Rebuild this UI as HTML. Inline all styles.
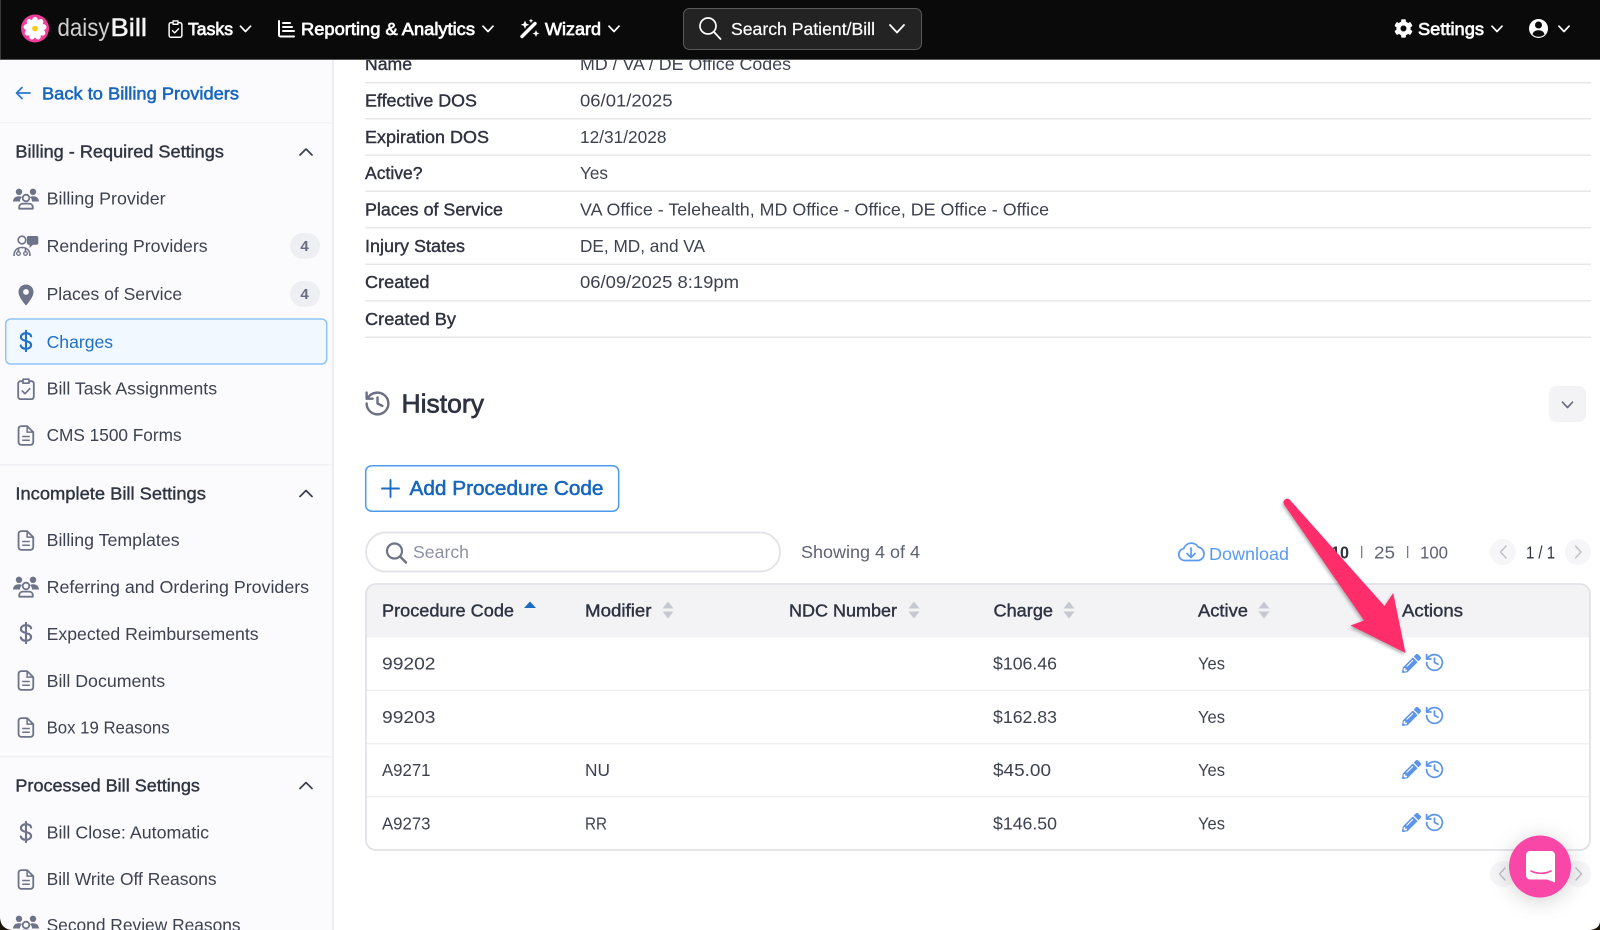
<!DOCTYPE html>
<html lang="en"><head><meta charset="utf-8"><title>daisyBill Charges</title>
<style>
html,body{margin:0;padding:0;background:#fff;width:1600px;height:930px;overflow:hidden}
svg{display:block}
text{font-family:"Liberation Sans",sans-serif;font-size:17.5px}
.m{stroke-width:.4px}
.s{stroke-width:.55px}
</style></head><body>
<svg xmlns="http://www.w3.org/2000/svg" width="1600" height="930" viewBox="0 0 1600 930">
<defs>
<symbol id="chev" viewBox="0 0 12 8"><path d="M1 1.2 6 6.5 11 1.2" fill="none" stroke="currentColor" stroke-width="1.7" stroke-linecap="round" stroke-linejoin="round"/></symbol>
<symbol id="up" viewBox="0 0 14 8"><path d="M1 7 7 1l6 6" fill="none" stroke="#3a3f4c" stroke-width="1.7" stroke-linecap="round" stroke-linejoin="round"/></symbol>
<symbol id="doc" viewBox="0 0 18 22"><path d="M4 1.2h6.2L16.6 7.500V18a2.800 2.800 0 0 1-2.800 2.800H4A2.800 2.800 0 0 1 1.200 18V4A2.800 2.800 0 0 1 4 1.200Z" fill="none" stroke="#6d7388" stroke-width="1.900" stroke-linejoin="round"/><path d="M10.200 1.500V7.500h6M5 12h8M5 16h8" fill="none" stroke="#6d7388" stroke-width="1.600"/></symbol>
<symbol id="dollar" viewBox="0 0 16 26"><path d="M14 7.500C13.500 5 11 3.800 8 3.800 4.600 3.800 2 5.500 2 8.200c0 6 12 3.500 12 9.600 0 2.800-2.700 4.400-6 4.400-3.200 0-5.600-1.300-6.200-4M8 1v24" fill="none" stroke="currentColor" stroke-width="2.500" stroke-linecap="round"/></symbol>
<symbol id="group" viewBox="0 0 26 22"><g fill="#6d7388"><circle cx="6" cy="3.800" r="3.200"/><circle cx="20" cy="3.800" r="3.200"/><path d="M0 13.500C.3 10 2.500 8.300 6 8.300c1.300 0 2.300.3 3.100.8C7.700 10 7 11.600 7 13.500ZM26 13.500C25.700 10 23.500 8.300 20 8.300c-1.300 0-2.300.3-3.100.8 1.400.9 2.100 2.500 2.100 4.400Z"/></g><circle cx="13" cy="10" r="3.300" fill="none" stroke="#6d7388" stroke-width="1.800"/><path d="M6.200 20.700v-1.500c0-2.200 1.800-3.600 4-3.600h5.600c2.200 0 4 1.400 4 3.600v1.500Z" fill="none" stroke="#6d7388" stroke-width="1.800" stroke-linejoin="round"/></symbol>
<symbol id="render" viewBox="0 0 26 22"><circle cx="9" cy="5" r="3.800" fill="none" stroke="#6d7388" stroke-width="1.700"/><path d="M15.500 1h8A1.800 1.800 0 0 1 25.300 2.800V8A1.800 1.800 0 0 1 23.500 9.800H20L16.500 13V9.800h-1A1.500 1.500 0 0 1 14 8V2.500A1.500 1.500 0 0 1 15.500 1Z" fill="#6d7388"/><path d="M1 21c0-5.500 3-8.500 8-8.500s8 3 8 8.500M5.500 13.500v3M12.500 13.500v3" fill="none" stroke="#6d7388" stroke-width="1.600"/><circle cx="5.500" cy="18.500" r="1.800" fill="none" stroke="#6d7388" stroke-width="1.300"/><circle cx="12.500" cy="18.500" r="1.800" fill="none" stroke="#6d7388" stroke-width="1.300"/></symbol>
<symbol id="pin" viewBox="0 0 16 22"><path fill-rule="evenodd" d="M8 .5C3.800.5.500 3.700.500 8c0 4.900 5 10.700 7.500 13.500C10.500 18.700 15.500 12.900 15.500 8 15.500 3.700 12.200.5 8 .5Zm0 10.300A2.900 2.900 0 1 1 8 5a2.900 2.900 0 0 1 0 5.800Z" fill="#6d7388"/></symbol>
<symbol id="clip" viewBox="0 0 18 22"><path d="M5.500 3.200H3.500A2.300 2.300 0 0 0 1.200 5.500v13.300A2.300 2.300 0 0 0 3.500 21.100h11a2.300 2.300 0 0 0 2.300-2.300V5.500a2.300 2.300 0 0 0-2.300-2.300h-2" fill="none" stroke="currentColor" stroke-width="1.800"/><path d="M6 1.200h6v4H6Z" fill="none" stroke="currentColor" stroke-width="1.700" stroke-linejoin="round"/><path d="M5.300 13l2.700 2.700 4.800-5" fill="none" stroke="currentColor" stroke-width="1.700" stroke-linecap="round" stroke-linejoin="round"/></symbol>
<symbol id="hist" viewBox="0 0 24 24"><path d="M3 12a9 9 0 1 0 9-9 9.750 9.750 0 0 0-6.740 2.740L3 8M3 3v5h5M12 7v5l4 2" fill="none" stroke="currentColor" stroke-width="2" stroke-linecap="round" stroke-linejoin="round"/></symbol>
<symbol id="pen" viewBox="0 0 512 512"><path fill="currentColor" d="M497.900 142.100l-46.100 46.100c-4.700 4.700-12.300 4.700-17 0l-111-111c-4.700-4.700-4.700-12.300 0-17l46.100-46.100c18.700-18.700 49.100-18.700 67.900 0l60.100 60.100c18.800 18.700 18.800 49.100 0 67.900zM284.200 99.800L21.600 362.400.4 483.900c-2.900 16.400 11.400 30.600 27.800 27.800l121.500-21.300 262.600-262.600c4.700-4.700 4.700-12.300 0-17l-111-111c-4.800-4.700-12.400-4.700-17.100 0zM124.100 339.900c-5.500-5.500-5.500-14.300 0-19.800l154-154c5.500-5.500 14.300-5.500 19.800 0s5.500 14.300 0 19.800l-154 154c-5.500 5.500-14.300 5.500-19.800 0zM88 424h48v36.300l-64.500 11.300-31.100-31.100L51.700 376H88v48z"/></symbol>
<symbol id="gear" viewBox="0 0 512 512"><path fill="#fff" d="M487.400 315.700l-42.600-24.600c4.300-23.200 4.300-47 0-70.200l42.600-24.600c4.900-2.800 7.100-8.600 5.500-14-11.100-35.600-30-67.800-54.700-94.600-3.800-4.100-10-5.100-14.800-2.300L380.800 110c-17.900-15.400-38.500-27.300-60.800-35.100V25.800c0-5.600-3.900-10.500-9.400-11.700-36.700-8.200-74.300-7.800-109.200 0-5.500 1.200-9.400 6.100-9.400 11.700V75c-22.200 7.900-42.800 19.800-60.800 35.100L88.700 85.500c-4.900-2.800-11-1.900-14.800 2.300-24.700 26.700-43.600 58.900-54.700 94.600-1.700 5.400.6 11.200 5.500 14L67.300 221c-4.300 23.200-4.300 47 0 70.200l-42.600 24.600c-4.900 2.800-7.100 8.600-5.500 14 11.100 35.600 30 67.800 54.700 94.600 3.800 4.100 10 5.100 14.800 2.300l42.600-24.600c17.900 15.400 38.500 27.300 60.800 35.100v49.200c0 5.600 3.900 10.500 9.400 11.700 36.700 8.200 74.300 7.800 109.200 0 5.500-1.200 9.400-6.100 9.400-11.700v-49.200c22.200-7.900 42.800-19.800 60.800-35.100l42.600 24.600c4.900 2.800 11 1.900 14.800-2.300 24.700-26.700 43.600-58.900 54.700-94.600 1.500-5.500-.7-11.300-5.600-14.100zM256 336c-44.100 0-80-35.900-80-80s35.900-80 80-80 80 35.900 80 80-35.900 80-80 80z"/></symbol>
<symbol id="sort" viewBox="0 0 12 18"><path d="M6 0.500 11.500 7.500H.5ZM6 17.500.5 10.500h11Z" fill="#c6c8d1"/></symbol>
<filter id="ash" x="-20%" y="-20%" width="140%" height="140%"><feDropShadow dx="-1" dy="2" stdDeviation="1.500" flood-color="#000" flood-opacity=".3"/></filter>
<filter id="bsh" x="-50%" y="-50%" width="200%" height="200%"><feDropShadow dx="0" dy="3" stdDeviation="10" flood-color="#000" flood-opacity=".18"/></filter>
</defs>

<rect width="1600" height="930" fill="#fff"/>

<!-- sidebar -->
<rect x="0" y="59" width="333" height="871" fill="#fbfbfe"/>
<rect x="332" y="59" width="2" height="871" fill="#eeeef2"/>
<rect x="0" y="122" width="332" height="1.500" fill="#f2f2f6"/>
<rect x="0" y="464" width="332" height="1.500" fill="#f2f2f6"/>
<rect x="0" y="756" width="332" height="1.500" fill="#f2f2f6"/>

<path d="M30 93H16.500M22 87.500 16.500 93l5.500 5.500" fill="none" stroke="#2a78cf" stroke-width="1.700" stroke-linecap="round" stroke-linejoin="round"/>
<text x="42" y="99.500" textLength="197" lengthAdjust="spacingAndGlyphs" fill="#1766bd" stroke="#1766bd" class="s">Back to Billing Providers</text>

<g fill="#2f3542" stroke="#2f3542" class="m" transform="translate(-.6 -.7)">
<text x="16" y="158.300" textLength="208.500" lengthAdjust="spacingAndGlyphs">Billing - Required Settings</text>
<text x="16" y="500" textLength="190.500" lengthAdjust="spacingAndGlyphs">Incomplete Bill Settings</text>
<text x="16" y="792.300" textLength="184.500" lengthAdjust="spacingAndGlyphs">Processed Bill Settings</text>
</g>
<use href="#up" x="299" y="148" width="14" height="8"/>
<use href="#up" x="299" y="489.500" width="14" height="8"/>
<use href="#up" x="299" y="781.500" width="14" height="8"/>

<rect x="5.700" y="319" width="321" height="45" rx="5" fill="#f2f8ff" stroke="#8fc4f8" stroke-width="1.500"/>

<g fill="#3d4250" transform="translate(-.4 -.5)">
<text x="47" y="205" textLength="119" lengthAdjust="spacingAndGlyphs">Billing Provider</text>
<text x="47" y="252.700" textLength="161" lengthAdjust="spacingAndGlyphs">Rendering Providers</text>
<text x="47" y="300.700" textLength="135.500" lengthAdjust="spacingAndGlyphs">Places of Service</text>
<text x="47" y="348.300" textLength="66.500" lengthAdjust="spacingAndGlyphs" fill="#1f6fc6">Charges</text>
<text x="47" y="395" textLength="170.500" lengthAdjust="spacingAndGlyphs">Bill Task Assignments</text>
<text x="47" y="441.700" textLength="135" lengthAdjust="spacingAndGlyphs">CMS 1500 Forms</text>
<text x="47" y="546.700" textLength="133" lengthAdjust="spacingAndGlyphs">Billing Templates</text>
<text x="47" y="593.300" textLength="262.500" lengthAdjust="spacingAndGlyphs">Referring and Ordering Providers</text>
<text x="47" y="640.300" textLength="212" lengthAdjust="spacingAndGlyphs">Expected Reimbursements</text>
<text x="47" y="687.300" textLength="118.500" lengthAdjust="spacingAndGlyphs">Bill Documents</text>
<text x="47" y="734" textLength="123" lengthAdjust="spacingAndGlyphs">Box 19 Reasons</text>
<text x="47" y="839" textLength="162.500" lengthAdjust="spacingAndGlyphs">Bill Close: Automatic</text>
<text x="47" y="885.700" textLength="170" lengthAdjust="spacingAndGlyphs">Bill Write Off Reasons</text>
<text x="47" y="931.700" textLength="194" lengthAdjust="spacingAndGlyphs">Second Review Reasons</text>
</g>

<use href="#group" x="13" y="188" width="26" height="22"/>
<use href="#render" x="13" y="235" width="26" height="22"/>
<use href="#pin" x="18" y="284" width="16" height="22"/>
<use href="#dollar" x="18" y="330" width="16" height="22" color="#1f6fc6"/>
<use href="#clip" x="17" y="378" width="18" height="22" color="#6d7388"/>
<use href="#doc" x="17" y="425" width="18" height="21"/>
<use href="#doc" x="17" y="530" width="18" height="21"/>
<use href="#group" x="13" y="576" width="26" height="22"/>
<use href="#dollar" x="18" y="622" width="16" height="22" color="#6d7388"/>
<use href="#doc" x="17" y="670" width="18" height="21"/>
<use href="#doc" x="17" y="717" width="18" height="21"/>
<use href="#dollar" x="18" y="821" width="16" height="22" color="#6d7388"/>
<use href="#doc" x="17" y="869" width="18" height="21"/>
<use href="#group" x="13" y="915" width="26" height="22"/>

<rect x="290" y="233" width="30" height="26" rx="13" fill="#eeeff3"/>
<rect x="290" y="281" width="30" height="26" rx="13" fill="#eeeff3"/>
<text x="304.500" y="251" text-anchor="middle" font-weight="700" fill="#666c80" style="font-size:15px">4</text>
<text x="304.500" y="299" text-anchor="middle" font-weight="700" fill="#666c80" style="font-size:15px">4</text>

<!-- detail rows -->
<g fill="#2f3340" stroke="#2f3340" class="m">
<text x="365" y="70" textLength="47" lengthAdjust="spacingAndGlyphs">Name</text>
<text x="365" y="106.500" textLength="112" lengthAdjust="spacingAndGlyphs">Effective DOS</text>
<text x="365" y="143" textLength="124" lengthAdjust="spacingAndGlyphs">Expiration DOS</text>
<text x="365" y="179" textLength="57.500" lengthAdjust="spacingAndGlyphs">Active?</text>
<text x="365" y="215.500" textLength="138" lengthAdjust="spacingAndGlyphs">Places of Service</text>
<text x="365" y="252" textLength="100" lengthAdjust="spacingAndGlyphs">Injury States</text>
<text x="365" y="288" textLength="64.500" lengthAdjust="spacingAndGlyphs">Created</text>
<text x="365" y="325" textLength="91" lengthAdjust="spacingAndGlyphs">Created By</text>
</g>
<g fill="#3d4250">
<text x="580" y="70" textLength="211" lengthAdjust="spacingAndGlyphs">MD / VA / DE Office Codes</text>
<text x="580" y="106.500" textLength="92.500" lengthAdjust="spacingAndGlyphs">06/01/2025</text>
<text x="580" y="143" textLength="86.500" lengthAdjust="spacingAndGlyphs">12/31/2028</text>
<text x="580" y="179" textLength="28" lengthAdjust="spacingAndGlyphs">Yes</text>
<text x="580" y="215.500" textLength="469" lengthAdjust="spacingAndGlyphs">VA Office - Telehealth, MD Office - Office, DE Office - Office</text>
<text x="580" y="252" textLength="125" lengthAdjust="spacingAndGlyphs">DE, MD, and VA</text>
<text x="580" y="288" textLength="159" lengthAdjust="spacingAndGlyphs">06/09/2025 8:19pm</text>
</g>
<g fill="#e8e8eb">
<rect x="365" y="82" width="1226" height="1.500"/><rect x="365" y="118" width="1226" height="1.500"/>
<rect x="365" y="154.500" width="1226" height="1.500"/><rect x="365" y="190.500" width="1226" height="1.500"/>
<rect x="365" y="227" width="1226" height="1.500"/><rect x="365" y="263.500" width="1226" height="1.500"/>
<rect x="365" y="300" width="1226" height="1.500"/><rect x="365" y="336.500" width="1226" height="1.500"/>
</g>

<!-- history -->
<use href="#hist" x="363" y="389" width="29" height="29" color="#6a7082"/>
<text x="401.500" y="412.700" textLength="82.500" lengthAdjust="spacingAndGlyphs" fill="#2d3340" stroke="#2d3340" stroke-width=".7" style="font-size:26px">History</text>
<rect x="1549" y="386" width="37" height="36" rx="7" fill="#f3f3f6"/>
<use href="#chev" x="1561.500" y="401" width="12" height="8" color="#6a7082"/>

<!-- add button -->
<rect x="365.700" y="465.700" width="253" height="45.500" rx="6" fill="#fff" stroke="#4c9bea" stroke-width="1.500"/>
<path d="M390.500 480v17M382 488.500h17" stroke="#1c6cc4" stroke-width="1.900" stroke-linecap="round"/>
<text x="409.500" y="495" textLength="194" lengthAdjust="spacingAndGlyphs" fill="#1766bd" stroke="#1766bd" class="s" style="font-size:20.500px">Add Procedure Code</text>

<!-- search -->
<rect x="366" y="532.500" width="414" height="39" rx="19.500" fill="#fff" stroke="#e2e2e7" stroke-width="1.800"/>
<circle cx="394.500" cy="551" r="7.500" fill="none" stroke="#6d7388" stroke-width="2.200"/>
<path d="M400 556.500l6 6" stroke="#6d7388" stroke-width="2.400" stroke-linecap="round"/>
<text x="413" y="558" textLength="56" lengthAdjust="spacingAndGlyphs" fill="#8d92a3">Search</text>
<text x="801" y="558" textLength="119" lengthAdjust="spacingAndGlyphs" fill="#5e6374">Showing 4 of 4</text>

<!-- download -->
<path d="M1184.500 560.500a6 6 0 0 1-.8-11.900 8 8 0 0 1 14.500-1.500 6.800 6.800 0 0 1 .3 13.400Z" fill="none" stroke="#5b9aef" stroke-width="1.700" stroke-linejoin="round"/>
<path d="M1191 548v9M1187 553.500l4 4 4-4" fill="none" stroke="#5b9aef" stroke-width="1.700" stroke-linecap="round" stroke-linejoin="round"/>
<text x="1209" y="560" textLength="80" lengthAdjust="spacingAndGlyphs" fill="#5b9aef">Download</text>
<text x="1331" y="558.300" textLength="18" lengthAdjust="spacingAndGlyphs" fill="#2d3340" font-weight="700">10</text>
<rect x="1361" y="546" width="1.300" height="12" fill="#777c8c"/>
<text x="1374" y="558.300" textLength="21" lengthAdjust="spacingAndGlyphs" fill="#5e6374">25</text>
<rect x="1407" y="546" width="1.300" height="12" fill="#777c8c"/>
<text x="1420" y="558.300" textLength="28" lengthAdjust="spacingAndGlyphs" fill="#5e6374">100</text>
<circle cx="1503" cy="552" r="13" fill="#f6f6f8"/>
<path d="M1506 546l-5.500 6 5.500 6" fill="none" stroke="#bfc1ca" stroke-width="1.500" stroke-linecap="round" stroke-linejoin="round"/>
<text x="1526" y="558.300" textLength="29" lengthAdjust="spacingAndGlyphs" fill="#2d3340">1 / 1</text>
<circle cx="1578" cy="552" r="13" fill="#f6f6f8"/>
<path d="M1575.500 546l5.500 6-5.500 6" fill="none" stroke="#bfc1ca" stroke-width="1.500" stroke-linecap="round" stroke-linejoin="round"/>

<!-- table -->
<path d="M366 637.500V594a10 10 0 0 1 10-10h1204a10 10 0 0 1 10 10v43.500Z" fill="#f3f3f6"/>
<rect x="366" y="584" width="1224" height="266" rx="10" fill="none" stroke="#e1e2e7" stroke-width="1.800"/>
<g fill="#f0f0f3">
<rect x="367" y="689.500" width="1222" height="1.500"/><rect x="367" y="743" width="1222" height="1.500"/><rect x="367" y="796" width="1222" height="1.500"/>
</g>
<g fill="#2d3340" stroke="#2d3340" class="m">
<text x="382" y="616.500" textLength="132" lengthAdjust="spacingAndGlyphs">Procedure Code</text>
<text x="585" y="616.500" textLength="66.500" lengthAdjust="spacingAndGlyphs">Modifier</text>
<text x="789" y="616.500" textLength="108" lengthAdjust="spacingAndGlyphs">NDC Number</text>
<text x="993.500" y="616.500" textLength="59.500" lengthAdjust="spacingAndGlyphs">Charge</text>
<text x="1198" y="616.500" textLength="50" lengthAdjust="spacingAndGlyphs">Active</text>
<text x="1402" y="616.500" textLength="61" lengthAdjust="spacingAndGlyphs">Actions</text>
</g>
<path d="M530 601.500l6 6.500h-12Z" fill="#1c6cc4"/>
<use href="#sort" x="662" y="601" width="12" height="18"/>
<use href="#sort" x="908" y="601" width="12" height="18"/>
<use href="#sort" x="1063" y="601" width="12" height="18"/>
<use href="#sort" x="1258" y="601" width="12" height="18"/>

<g fill="#3d4250">
<text x="382" y="669.500" textLength="53.500" lengthAdjust="spacingAndGlyphs">99202</text>
<text x="993" y="669.500" textLength="64" lengthAdjust="spacingAndGlyphs">$106.46</text>
<text x="1198" y="669.500" textLength="27" lengthAdjust="spacingAndGlyphs">Yes</text>
<text x="382" y="723" textLength="53.500" lengthAdjust="spacingAndGlyphs">99203</text>
<text x="993" y="723" textLength="64" lengthAdjust="spacingAndGlyphs">$162.83</text>
<text x="1198" y="723" textLength="27" lengthAdjust="spacingAndGlyphs">Yes</text>
<text x="382" y="776" textLength="48.500" lengthAdjust="spacingAndGlyphs">A9271</text>
<text x="585" y="776" textLength="25" lengthAdjust="spacingAndGlyphs">NU</text>
<text x="993" y="776" textLength="58" lengthAdjust="spacingAndGlyphs">$45.00</text>
<text x="1198" y="776" textLength="27" lengthAdjust="spacingAndGlyphs">Yes</text>
<text x="382" y="829.500" textLength="48.500" lengthAdjust="spacingAndGlyphs">A9273</text>
<text x="585" y="829.500" textLength="22" lengthAdjust="spacingAndGlyphs">RR</text>
<text x="993" y="829.500" textLength="64" lengthAdjust="spacingAndGlyphs">$146.50</text>
<text x="1198" y="829.500" textLength="27" lengthAdjust="spacingAndGlyphs">Yes</text>
</g>

<g color="#5b94ea">
<use href="#pen" x="1402" y="654" width="19" height="19"/><use href="#hist" x="1424" y="652" width="21" height="21"/>
<use href="#pen" x="1402" y="707" width="19" height="19"/><use href="#hist" x="1424" y="705" width="21" height="21"/>
<use href="#pen" x="1402" y="760" width="19" height="19"/><use href="#hist" x="1424" y="759" width="21" height="21"/>
<use href="#pen" x="1402" y="813" width="19" height="19"/><use href="#hist" x="1424" y="812" width="21" height="21"/>
</g>

<!-- lower pager -->
<circle cx="1503" cy="874" r="13" fill="#f6f6f8"/>
<path d="M1505 868l-5.500 6 5.500 6" fill="none" stroke="#bfc1ca" stroke-width="1.500" stroke-linecap="round" stroke-linejoin="round"/>
<circle cx="1578" cy="874" r="13" fill="#f6f6f8"/>
<path d="M1576 868l5.500 6-5.500 6" fill="none" stroke="#bfc1ca" stroke-width="1.500" stroke-linecap="round" stroke-linejoin="round"/>

<!-- chat launcher -->
<circle cx="1540" cy="866.500" r="31" fill="#f946a8" filter="url(#bsh)"/>
<path d="M1530 851h21a4 4 0 0 1 4 4v27.500l-8-3h-17a4 4 0 0 1-4-4V855a4 4 0 0 1 4-4Z" fill="#fff"/>
<path d="M1531 871c6 3 14 3 20 0" fill="none" stroke="#f946a8" stroke-width="1.600" stroke-linecap="round"/>

<!-- arrow -->
<path d="M1285 499.500c1.500-1.300 3.500-1.200 5 .5L1384.500 606l8.700-13L1405.500 653l-55-27.500 13.500-5L1284 504.500c-1-1.600-.5-3.700 1-5Z" fill="#ff2d6b" filter="url(#ash)"/>

<!-- top bar -->
<rect width="1600" height="59.500" fill="#0a0a0a"/>
<rect y="59" width="1600" height="1" fill="#555"/>
<rect width="1" height="59" fill="#3a3a3a"/>
<circle cx="35" cy="28.500" r="14" fill="#f23d9d"/>
<g fill="#fff" transform="translate(35 28.500)">
<ellipse cx="0" cy="-7" rx="3.200" ry="4.600"/><ellipse cx="0" cy="-7" rx="3.200" ry="4.600" transform="rotate(40)"/><ellipse cx="0" cy="-7" rx="3.200" ry="4.600" transform="rotate(80)"/><ellipse cx="0" cy="-7" rx="3.200" ry="4.600" transform="rotate(120)"/><ellipse cx="0" cy="-7" rx="3.200" ry="4.600" transform="rotate(160)"/><ellipse cx="0" cy="-7" rx="3.200" ry="4.600" transform="rotate(200)"/><ellipse cx="0" cy="-7" rx="3.200" ry="4.600" transform="rotate(240)"/><ellipse cx="0" cy="-7" rx="3.200" ry="4.600" transform="rotate(280)"/><ellipse cx="0" cy="-7" rx="3.200" ry="4.600" transform="rotate(320)"/>
</g>
<circle cx="35" cy="28.500" r="2.800" fill="#ffc90e"/>
<text x="57.500" y="36" textLength="52" lengthAdjust="spacingAndGlyphs" fill="#cfcfcf" style="font-size:25px">daisy</text>
<text x="110.500" y="36" textLength="36.500" lengthAdjust="spacingAndGlyphs" fill="#f4f4f4" stroke="#f4f4f4" stroke-width=".5" style="font-size:25px">Bill</text>

<use href="#clip" x="168" y="20" width="15" height="18" color="#fff"/>
<g fill="#fff" stroke="#fff" stroke-width=".7">
<text x="188" y="35" textLength="45" lengthAdjust="spacingAndGlyphs">Tasks</text>
<text x="301" y="35" textLength="174" lengthAdjust="spacingAndGlyphs">Reporting &amp; Analytics</text>
<text x="545" y="35" textLength="56" lengthAdjust="spacingAndGlyphs">Wizard</text>
<text x="1418" y="35" textLength="66" lengthAdjust="spacingAndGlyphs">Settings</text>
</g>
<g color="#fff">
<use href="#chev" x="239.500" y="25" width="12" height="8"/>
<use href="#chev" x="482" y="25" width="12" height="8"/>
<use href="#chev" x="608" y="25" width="12" height="8"/>
<use href="#chev" x="1491" y="25" width="12" height="8"/>
<use href="#chev" x="1558" y="25" width="12" height="8"/>
</g>
<path d="M279 21v14a1.500 1.500 0 0 0 1.500 1.500H294" fill="none" stroke="#fff" stroke-width="2" stroke-linecap="round"/>
<path d="M283 23h7M283 27h9M283 31h11" fill="none" stroke="#fff" stroke-width="2" stroke-linecap="round"/>
<path d="M522 36.500 535 23.500" stroke="#fff" stroke-width="3.400" stroke-linecap="round"/>
<path d="M525 20.500l1.200 3 3 1.200-3 1.200-1.200 3-1.200-3-3-1.200 3-1.200ZM536 30l1 2.500 2.500 1-2.500 1-1 2.500-1-2.500-2.500-1 2.500-1ZM531 18.500l.7 1.600 1.600.7-1.600.7-.7 1.600-.7-1.600-1.600-.7 1.600-.7Z" fill="#fff"/>

<rect x="683.500" y="8.500" width="238" height="41" rx="6" fill="#232323" stroke="#5a5a5a" stroke-width="1"/>
<circle cx="708" cy="26" r="8" fill="none" stroke="#fff" stroke-width="1.700"/>
<path d="M714 32l6.500 7" stroke="#fff" stroke-width="1.800" stroke-linecap="round"/>
<text x="731" y="35" textLength="144" lengthAdjust="spacingAndGlyphs" fill="#fff" stroke="#fff" stroke-width=".2">Search Patient/Bill</text>
<path d="M890 25l7 7.500 7-7.500" fill="none" stroke="#fff" stroke-width="1.800" stroke-linecap="round" stroke-linejoin="round"/>

<use href="#gear" x="1394" y="19" width="19" height="19"/>
<circle cx="1538.500" cy="28.500" r="9.500" fill="#fff"/>
<circle cx="1538.500" cy="25" r="3.500" fill="#0a0a0a"/>
<path d="M1532.500 34.500c.8-3 3-4.200 6-4.200s5.200 1.200 6 4.200a9 9 0 0 1-12 0Z" fill="#0a0a0a"/>

<!-- window corners -->
<path d="M0 918Q1 929 12 930H0Z" fill="#1b1408"/>
<path d="M1600 922Q1599 929 1590 930H1600Z" fill="#1b1408"/>
</svg>
</body></html>
